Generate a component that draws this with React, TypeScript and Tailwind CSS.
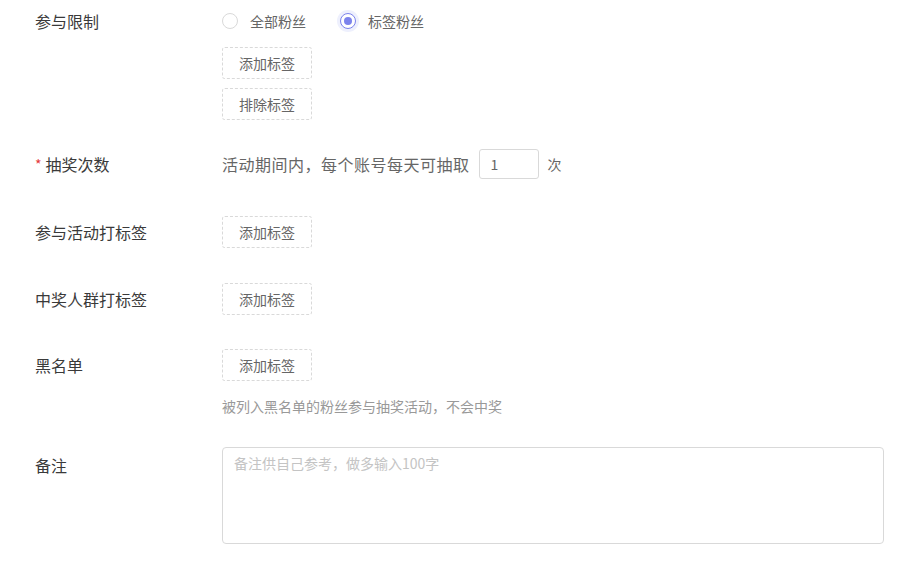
import React from 'react';

const font = { fontFamily: '"Noto Sans CJK SC", "Noto Sans", sans-serif' };

function DashedButton({ children }: { children: React.ReactNode }) {
  return (
    <button
      type="button"
      className="h-[32px] w-[90px] rounded-[3px] border border-dashed border-[#d9d9d9] bg-white text-[14px] text-[#666] leading-[30px]"
    >
      {children}
    </button>
  );
}

function Radio({ label, checked }: { label: string; checked?: boolean }) {
  return (
    <label className="flex items-center gap-[12px] cursor-pointer">
      <span
        className={
          checked
            ? 'flex h-[16px] w-[16px] items-center justify-center rounded-full border border-[#7c83ec] bg-white shadow-[0_0_0_3px_#eef0fd]'
            : 'flex h-[16px] w-[16px] items-center justify-center rounded-full border border-[#d9d9d9] bg-white'
        }
      >
        {checked && <span className="h-[8px] w-[8px] rounded-full bg-[#7c83ec]" />}
      </span>
      <span className="text-[14px] text-[#666]">{label}</span>
    </label>
  );
}

function Label({ children, required }: { children: React.ReactNode; required?: boolean }) {
  return (
    <div className="w-[187px] shrink-0 h-[32px] flex items-center text-[16px] text-[#3a3a3a]">
      {required && <span className="mr-[4px] text-[#e4393c] text-[14px]">*</span>}
      {children}
    </div>
  );
}

export default function App() {
  return (
    <div className="min-h-screen bg-white pl-[35px] pt-[5px]" style={font}>
      {/* 参与限制 */}
      <div className="flex">
        <Label>参与限制</Label>
        <div className="flex flex-col">
          <div className="flex h-[32px] items-center gap-[34px]">
            <Radio label="全部粉丝" />
            <Radio label="标签粉丝" checked />
          </div>
          <div className="mt-[10px] flex flex-col gap-[9px]">
            <DashedButton>添加标签</DashedButton>
            <DashedButton>排除标签</DashedButton>
          </div>
        </div>
      </div>

      {/* 抽奖次数 */}
      <div className="mt-[28px] flex">
        <Label required>抽奖次数</Label>
        <div className="flex h-[32px] items-center text-[16px] text-[#666]">
          <span className="tracking-[0.5px]">活动期间内，每个账号每天可抽取</span>
          <input
            defaultValue="1"
            className="ml-[9px] h-[30px] w-[60px] rounded-[3px] border border-[#d9d9d9] px-[11px] text-[14px] text-[#666] outline-none"
          />
          <span className="ml-[9px] text-[14px]">次</span>
        </div>
      </div>

      {/* 参与活动打标签 */}
      <div className="mt-[36px] flex">
        <Label>参与活动打标签</Label>
        <DashedButton>添加标签</DashedButton>
      </div>

      {/* 中奖人群打标签 */}
      <div className="mt-[35px] flex">
        <Label>中奖人群打标签</Label>
        <DashedButton>添加标签</DashedButton>
      </div>

      {/* 黑名单 */}
      <div className="mt-[34px] flex">
        <Label>黑名单</Label>
        <div className="flex flex-col">
          <DashedButton>添加标签</DashedButton>
          <p className="mt-[16px] text-[14px] text-[#999] leading-[18px]">
            被列入黑名单的粉丝参与抽奖活动，不会中奖
          </p>
        </div>
      </div>

      {/* 备注 */}
      <div className="mt-[32px] flex">
        <div className="w-[187px] shrink-0 pt-[4px] text-[16px] text-[#3a3a3a] h-[32px] flex items-center">
          备注
        </div>
        <textarea
          placeholder="备注供自己参考，做多输入100字"
          className="h-[97px] w-[662px] resize-none rounded-[4px] border border-[#d9d9d9] px-[11px] py-[5px] text-[14px] text-[#666] placeholder:text-[#c4c4c4] outline-none"
        />
      </div>
    </div>
  );
}
